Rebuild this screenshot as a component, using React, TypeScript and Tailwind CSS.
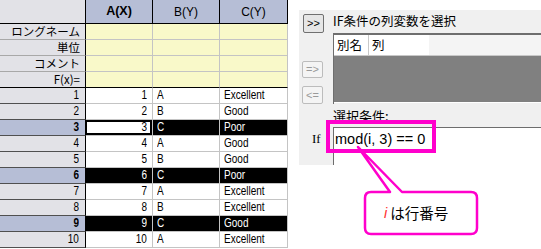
import React from "react";

const labels = ["ロングネーム", "単位", "コメント", "F(x)="];

const rows: [number, string, string][] = [
  [1, "A", "Excellent"],
  [2, "B", "Good"],
  [3, "C", "Poor"],
  [4, "A", "Good"],
  [5, "B", "Good"],
  [6, "C", "Poor"],
  [7, "A", "Excellent"],
  [8, "B", "Excellent"],
  [9, "C", "Good"],
  [10, "A", "Excellent"],
];

// narrow grid font: squeeze Liberation Sans horizontally
function Nar({ children, right }: { children: React.ReactNode; right?: boolean }) {
  return (
    <span className={`inline-block scale-x-[0.8] ${right ? "origin-right" : "origin-left"}`}>{children}</span>
  );
}

function Sheet() {
  return (
    <div className="flex w-[288px] shrink-0 flex-col font-['Liberation_Sans',sans-serif] text-[12.5px] text-black">
      <div className="flex h-[24px]">
        <div className="w-[86px] border-r border-b border-black bg-[#e2e2e7]" />
        <div className="flex w-[67px] items-center justify-center border-r border-b border-black bg-[#b6bed6] text-[12.5px] font-bold">
          A(X)
        </div>
        <div className="flex w-[67px] items-center justify-center border-r border-b border-black bg-[#b6bed6] text-[12px]">
          B(Y)
        </div>
        <div className="flex w-[68px] items-center justify-center border-r border-b border-black bg-[#b6bed6] text-[12px]">
          C(Y)
        </div>
      </div>

      {labels.map((l, i) => {
        const last = i === labels.length - 1;
        return (
          <div key={l} className="flex h-[16px]">
            <div
              className={`flex w-[86px] items-center justify-end border-r border-b border-r-black pr-[5px] font-['Noto_Sans_CJK_JP',sans-serif] text-[11.5px] leading-none ${
                last ? "border-b-black" : "border-b-[#a8a8a8]"
              } bg-[#e2e2e7]`}
            >
              {l}
            </div>
            {[67, 67, 68].map((w, j) => (
              <div
                key={j}
                className={`border-r border-b border-r-[#c4c4c4] bg-[#f9f9c9] ${last ? "border-b-black" : "border-b-[#c4c4c4]"} ${
                  w === 68 ? "w-[68px]" : "w-[67px]"
                }`}
              />
            ))}
          </div>
        );
      })}

      {rows.map(([n, b, c]) => {
        const sel = n % 3 === 0;
        const active = n === 3;
        return (
          <div key={n} className="flex h-[16px] leading-none">
            <div
              className={`flex w-[86px] items-center justify-end border-r border-b border-r-black border-b-[#505050] pr-[6px] ${
                sel ? "bg-[#b6bed6] font-bold" : "bg-[#e2e2e7]"
              }`}
            >
              <Nar right>{n}</Nar>
            </div>
            <div
              className={`flex w-[67px] items-center justify-end border-r border-b border-[#c4c4c4] ${
                sel ? "bg-black text-white" : "bg-white"
              } ${active ? "p-[2px] pl-[1px]" : "pr-[5px]"}`}
            >
              {active ? (
                <div className="flex h-full w-full items-center justify-end bg-white pr-[3px] text-black">
                  <Nar right>{n}</Nar>
                </div>
              ) : (
                <Nar right>{n}</Nar>
              )}
            </div>
            <div
              className={`flex w-[67px] items-center border-r border-b border-[#c4c4c4] pl-[4px] ${
                sel ? "bg-black text-white" : "bg-white"
              }`}
            >
              <Nar>{b}</Nar>
            </div>
            <div
              className={`flex w-[68px] items-center border-r border-b border-[#c4c4c4] pl-[4px] ${
                sel ? "bg-black text-white" : "bg-white"
              }`}
            >
              <Nar>{c}</Nar>
            </div>
          </div>
        );
      })}
    </div>
  );
}

function Btn({ label, on, h }: { label: string; on?: boolean; h: string }) {
  return (
    <div
      className={`flex w-[21px] items-center justify-center rounded-[2px] border font-['Liberation_Sans',sans-serif] text-[11px] leading-none ${h} ${
        on ? "border-[#707070] bg-[#e6e6e6] text-black" : "border-[#bcbcbc] bg-[#f4f4f4] text-[#9a9a9a]"
      }`}
    >
      {label}
    </div>
  );
}

function Panel() {
  return (
    <div className="ml-[11px] mt-[10px] flex h-[155px] flex-1 flex-col bg-[#f0f0f0] font-['Noto_Sans_CJK_JP',sans-serif] text-black">
      <div className="flex h-[23px]">
        <div className="w-[34px] pl-[4px] pt-[4px]">
          <Btn label=">>" on h="h-[19px]" />
        </div>
        <div className="flex-1 pt-[2px] text-[12.5px] leading-[18px]">IF条件の列変数を選択</div>
      </div>

      <div className="flex h-[71px]">
        <div className="flex w-[34px] flex-col gap-[8px] pl-[3px] pt-[28px]">
          <Btn label="=>" h="h-[17px]" />
          <Btn label="<=" h="h-[18px]" />
        </div>
        <div className="flex flex-1 flex-col border-t-2 border-l border-[#6e6e6e]">
          <div className="flex h-[21px] bg-[#f4f4f4] text-[12.5px] leading-none">
            <div className="flex w-[35px] items-center border-r border-b border-[#c8c8c8] bg-white pl-[3px]">別名</div>
            <div className="flex w-[60px] items-center border-b border-[#c8c8c8] bg-white pl-[3px]">列</div>
            <div className="flex-1 border-b border-[#c8c8c8]" />
          </div>
          <div className="h-[47px] border-b border-white bg-[#808080]" />
        </div>
      </div>

      <div className="flex h-[23px]">
        <div className="w-[34px]" />
        <div className="flex-1 pt-[3px] text-[13px] leading-[18px]">選択条件:</div>
      </div>

      <div className="flex flex-1">
        <div className="w-[34px] pl-[13px] pt-[4px] font-['Liberation_Serif',serif] text-[13px] leading-[16px]">If</div>
        <div className="flex-1 border-t border-l border-[#6d6d6d] bg-white pl-[1px] pt-[2px] font-['Liberation_Sans',sans-serif] text-[14.5px] leading-[18px]">
          mod(i, 3) == 0
        </div>
      </div>
    </div>
  );
}

function Callout() {
  return (
    <>
      <svg className="pointer-events-none absolute left-0 top-0" width="541" height="249" viewBox="0 0 541 249">
        <path
          d="M371 192 L390 192 L358 147 L402 192 L471 192 Q477 192 477 198 L477 228 Q477 234 471 234 L371 234 Q365 234 365 228 L365 198 Q365 192 371 192 Z"
          fill="white"
          stroke="#ff00cc"
          strokeWidth="2.5"
          strokeLinejoin="round"
        />
      </svg>
      <div className="absolute left-[384px] top-[204px] flex items-center text-[14.5px] leading-[18px]">
        <span className="pr-[3px] font-['Liberation_Sans',sans-serif] italic text-[#ff3030]">i</span>
        <span className="font-['Noto_Sans_CJK_JP',sans-serif] text-black">は行番号</span>
      </div>
    </>
  );
}

export default function App() {
  return (
    <div className="relative flex h-[249px] w-[541px] overflow-hidden bg-white">
      <Sheet />
      <Panel />
      <div className="absolute left-[326px] top-[120px] h-[33px] w-[110px] border-4 border-[#ff00cc]" />
      <Callout />
    </div>
  );
}
